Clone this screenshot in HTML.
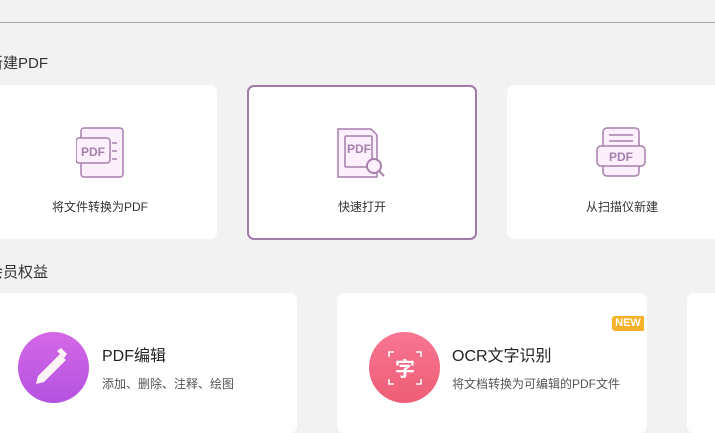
<!DOCTYPE html>
<html><head><meta charset="utf-8"><style>
body{margin:0;width:715px;height:419px;overflow:hidden;background:#f2f2f2;font-family:"Liberation Sans","Noto Sans CJK SC",sans-serif;position:relative;color:#333}
.a{position:absolute}
.line{left:0;top:22px;width:715px;height:1px;background:#aaa}
.h{font-size:15px;color:#333}
.card{background:#fff;border-radius:7px}
.lbl{font-size:12px;color:#333;text-align:center;width:100%;top:113px}
.t{font-size:16px;color:#222}
.s{font-size:12px;color:#555}
</style></head><body>
<div class="a line"></div>
<div class="a h" style="left:-12px;top:52px">新建PDF</div>
<div class="a card" style="left:-20px;top:85px;width:237px;height:154px">
 <svg class="a" style="left:96px;top:42px" width="52" height="52" viewBox="0 0 52 52">
  <rect x="5" y="1" width="42" height="49" rx="3" fill="#fdf0fd" stroke="#a77fad" stroke-width="1.5"/>
  <rect x="0" y="11" width="34" height="25" rx="3" fill="#fdf0fd" stroke="#a77fad" stroke-width="1.5"/>
  <text x="17" y="29" font-size="12" font-weight="bold" fill="#a77fad" text-anchor="middle" font-family="Liberation Sans">PDF</text>
  <path d="M36 16h5M36 24h5M36 32h5" stroke="#a77fad" stroke-width="1.5"/>
 </svg>
 <div class="a lbl" style="left:20px;width:200px;text-align:center">将文件转换为PDF</div>
</div>
<div class="a card" style="left:247px;top:85px;width:226px;height:151px;border:2px solid #a07aa8">
 <svg class="a" style="left:88px;top:41px" width="52" height="52" viewBox="0 0 52 52">
  <path d="M1 1h33l6 6v42H1z" fill="#fdf0fd" stroke="#a77fad" stroke-width="1.5"/>
  <rect x="8" y="8" width="27" height="31" rx="1" fill="#fdf0fd" stroke="#a77fad" stroke-width="1.5"/>
  <text x="22" y="25" font-size="12" font-weight="bold" fill="#a77fad" text-anchor="middle" font-family="Liberation Sans">PDF</text>
  <circle cx="37" cy="38" r="7" fill="#fdf0fd" stroke="#a77fad" stroke-width="2"/>
  <path d="M42 43l5 5" stroke="#a77fad" stroke-width="2"/>
 </svg>
 <div class="a lbl" style="left:0;top:111px">快速打开</div>
</div>
<div class="a card" style="left:507px;top:85px;width:230px;height:154px">
 <svg class="a" style="left:89px;top:42px" width="52" height="52" viewBox="0 0 52 52">
  <rect x="7" y="1" width="36" height="48" rx="4" fill="#fdf0fd" stroke="#a77fad" stroke-width="1.5"/>
  <path d="M13 8h24M13 14h24" stroke="#a77fad" stroke-width="1.5"/>
  <rect x="1" y="19" width="48" height="20" rx="4" fill="#fdf0fd" stroke="#a77fad" stroke-width="1.5"/>
  <text x="25" y="34" font-size="12" font-weight="bold" fill="#a77fad" text-anchor="middle" font-family="Liberation Sans">PDF</text>
 </svg>
 <div class="a lbl" style="left:0;width:230px">从扫描仪新建</div>
</div>
<div class="a h" style="left:-12px;top:261px">会员权益</div>
<div class="a card" style="left:-20px;top:293px;width:317px;height:140px"></div>
<div class="a" style="left:18px;top:332px;width:71px;height:71px;border-radius:50%;background:linear-gradient(#d468e6,#b352e0)"></div>
<svg class="a" style="left:30px;top:348px" width="45" height="42" viewBox="0 0 45 42">
 <path d="M6 36l2-8 22-22 6 6-22 22z" fill="#fdf2f4"/><path d="M27 3l4-3 6 6-3 4z" fill="#fdf2f4"/>
</svg>
<div class="a t" style="left:102px;top:342px">PDF编辑</div>
<div class="a s" style="left:102px;top:375px">添加、删除、注释、绘图</div>
<div class="a card" style="left:337px;top:293px;width:310px;height:140px"></div>
<div class="a" style="left:369px;top:332px;width:71px;height:71px;border-radius:50%;background:linear-gradient(#f87592,#ee5d75)"></div>
<svg class="a" style="left:385px;top:348px" width="40" height="40" viewBox="0 0 40 40">
 <path d="M4 9V4h5M31 4h5v5M36 31v5h-5M9 36H4v-5" stroke="#fff" stroke-width="1.5" fill="none"/>
 <text x="20" y="28" font-size="20" font-weight="bold" fill="#fff" text-anchor="middle" font-family="Noto Sans CJK SC">字</text>
</svg>
<div class="a t" style="left:452px;top:342px">OCR文字识别</div>
<div class="a s" style="left:452px;top:375px">将文档转换为可编辑的PDF文件</div>
<div class="a" style="left:612px;top:316px;width:32px;height:15px;background:#f6b128;border-radius:3px 0 0 3px;color:#fff;font-size:11px;font-weight:bold;line-height:15px;text-align:center">NEW</div>
<div class="a card" style="left:687px;top:293px;width:60px;height:140px"></div>
</body></html>
